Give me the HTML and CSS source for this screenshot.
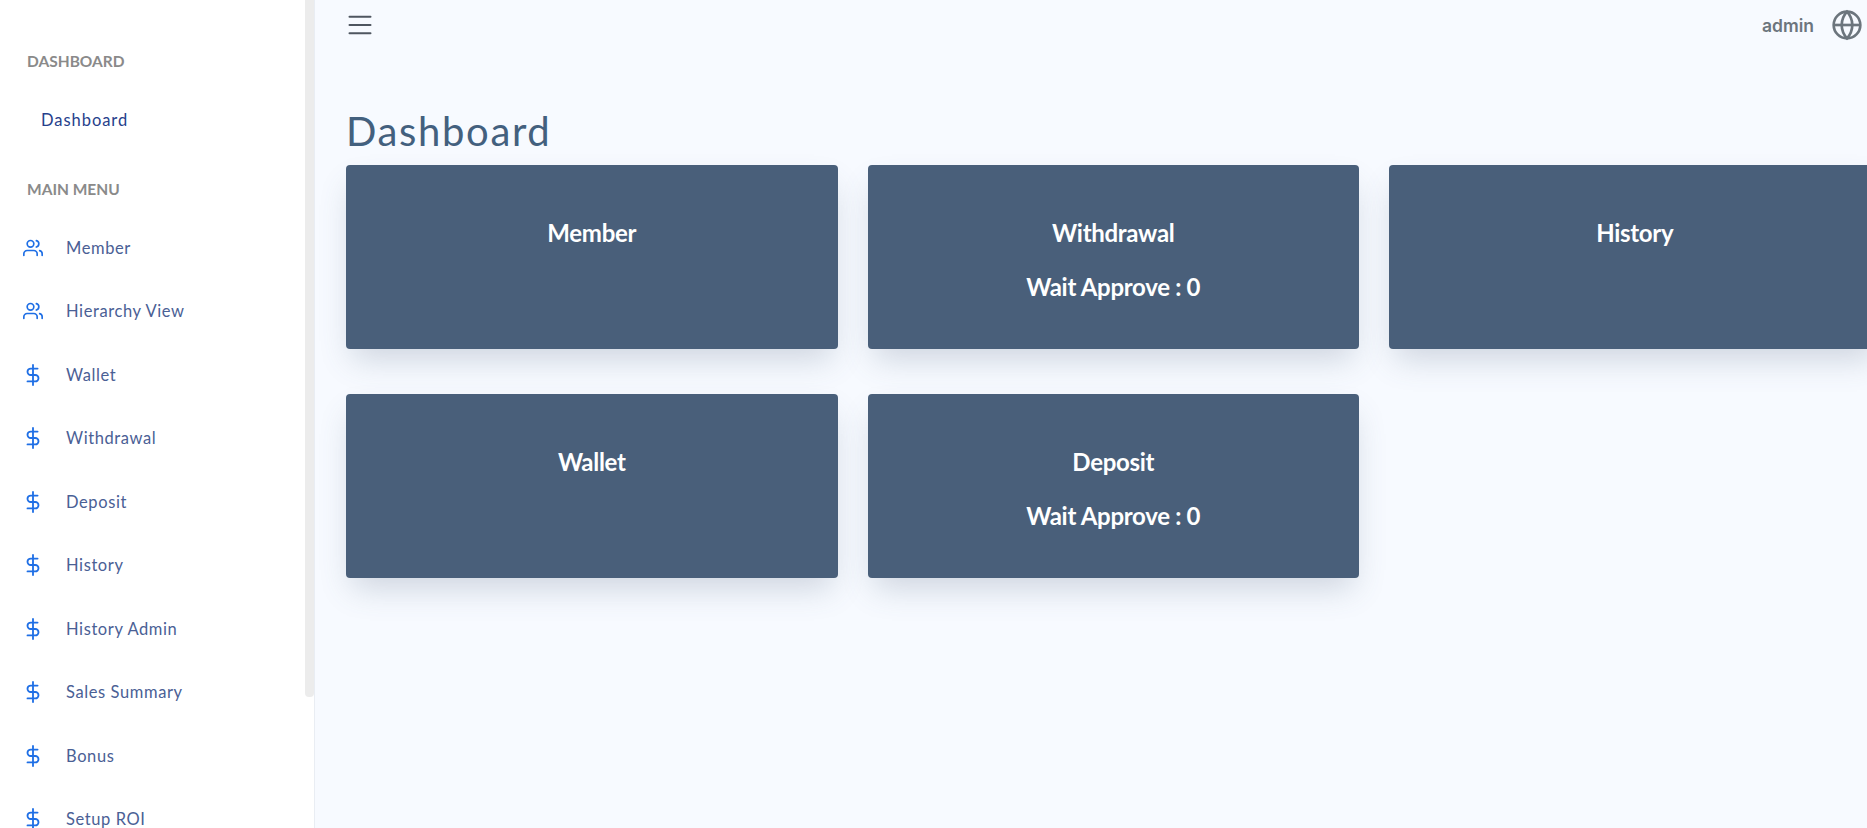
FILE: index.html
```html
<!DOCTYPE html>
<html lang="en">
<head>
    <meta charset="UTF-8">
    <meta name="viewport" content="width=device-width, initial-scale=1.0">
    <title>Dashboard</title>
    <link rel="stylesheet" href="styles.css">
</head>
<body>
    <svg class="icon-defs" width="0" height="0">
        <symbol id="i-users" viewBox="0 0 24 24">
            <path d="M17 21v-2a4 4 0 0 0-4-4H5a4 4 0 0 0-4 4v2"/>
            <circle cx="9" cy="7" r="4"/>
            <path d="M23 21v-2a4 4 0 0 0-3-3.87"/>
            <path d="M16 3.13a4 4 0 0 1 0 7.75"/>
        </symbol>
        <symbol id="i-dollar" viewBox="0 0 24 24">
            <line x1="12" y1="1" x2="12" y2="23"/>
            <path d="M17 5H9.5a3.5 3.5 0 0 0 0 7h5a3.5 3.5 0 0 1 0 7H6"/>
        </symbol>
    </svg>

    <aside class="sidebar">
        <nav class="sidebar-nav">
            <div class="nav-title">DASHBOARD</div>
            <a class="nav-sub">Dashboard</a>
            <div class="nav-title nav-title-main">MAIN MENU</div>
            <a class="nav-item"><svg class="nav-icon nav-icon-users"><use href="#i-users"/></svg>Member</a>
            <a class="nav-item"><svg class="nav-icon nav-icon-users"><use href="#i-users"/></svg>Hierarchy View</a>
            <a class="nav-item"><svg class="nav-icon"><use href="#i-dollar"/></svg>Wallet</a>
            <a class="nav-item"><svg class="nav-icon"><use href="#i-dollar"/></svg>Withdrawal</a>
            <a class="nav-item"><svg class="nav-icon"><use href="#i-dollar"/></svg>Deposit</a>
            <a class="nav-item"><svg class="nav-icon"><use href="#i-dollar"/></svg>History</a>
            <a class="nav-item"><svg class="nav-icon"><use href="#i-dollar"/></svg>History Admin</a>
            <a class="nav-item"><svg class="nav-icon"><use href="#i-dollar"/></svg>Sales Summary</a>
            <a class="nav-item"><svg class="nav-icon"><use href="#i-dollar"/></svg>Bonus</a>
            <a class="nav-item"><svg class="nav-icon"><use href="#i-dollar"/></svg>Setup ROI</a>
        </nav>
        <div class="sidebar-scroll"><div class="sidebar-thumb"></div></div>
    </aside>

    <main class="main">
        <header class="topbar">
            <svg class="menu-icon" viewBox="0 0 24 24">
                <line x1="3" y1="5" x2="21" y2="5"/>
                <line x1="3" y1="12" x2="21" y2="12"/>
                <line x1="3" y1="19" x2="21" y2="19"/>
            </svg>
            <div class="user-box">
                <span class="user-name">admin</span>
                <svg class="globe-icon" viewBox="0 0 24 24">
                    <circle cx="12" cy="12" r="10"/>
                    <line x1="2" y1="12" x2="22" y2="12"/>
                    <path d="M12 2a15.3 15.3 0 0 1 4 10 15.3 15.3 0 0 1-4 10 15.3 15.3 0 0 1-4-10 15.3 15.3 0 0 1 4-10z"/>
                </svg>
            </div>
        </header>
        <h1 class="page-title">Dashboard</h1>
        <div class="card-grid">
            <div class="card"><h4>Member</h4></div>
            <div class="card"><h4>Withdrawal</h4><h4>Wait Approve : 0</h4></div>
            <div class="card"><h4>History</h4></div>
            <div class="card"><h4>Wallet</h4></div>
            <div class="card"><h4>Deposit</h4><h4>Wait Approve : 0</h4></div>
        </div>
    </main>
</body>
</html>
```

FILE: styles.css
```css
* {
    box-sizing: border-box;
}

html, body {
    height: 100%;
}

body {
    margin: 0;
    display: flex;
    overflow: hidden;
    background: #f7faff;
    font-family: "Lato", "Open Sans", sans-serif;
}

.icon-defs {
    position: absolute;
}

.sidebar {
    display: flex;
    flex: 0 0 315px;
    height: 828px;
    overflow: hidden;
    background: #fff;
    border-right: 1px solid #e9edf3;
}

.sidebar-nav {
    flex: 0 0 305px;
    padding-top: 52px;
}

.sidebar-scroll {
    flex: 0 0 9px;
}

.sidebar-thumb {
    height: 697px;
    background: #ececec;
    border-radius: 0 0 4px 4px;
}

.nav-title {
    height: 18px;
    padding-left: 27px;
    font-size: 15.5px;
    line-height: 18px;
    font-weight: 700;
    color: #8a8a8a;
}

.nav-title-main {
    margin-top: 51px;
}

.nav-sub {
    display: block;
    margin-top: 41px;
    height: 18px;
    padding-left: 41px;
    font-size: 16.5px;
    line-height: 18px;
    letter-spacing: 0.95px;
    color: #26408b;
}

.nav-item {
    display: flex;
    align-items: center;
    height: 63.5px;
    padding-left: 22px;
    font-size: 16.5px;
    letter-spacing: 0.6px;
    color: #4a6095;
}

.nav-title-main + .nav-item {
    margin-top: 18px;
}

.nav-icon {
    flex: 0 0 22px;
    width: 22px;
    height: 22px;
    margin-right: 22px;
    fill: none;
    stroke: #1f6fe5;
    stroke-width: 2;
    stroke-linecap: round;
    stroke-linejoin: round;
}

.nav-icon-users {
    flex-basis: 20px;
    width: 20px;
    height: 20px;
    margin: 0 23px 0 1px;
}

.main {
    flex: 1;
    min-width: 0;
    padding-left: 31px;
}

.topbar {
    display: flex;
    justify-content: space-between;
    align-items: center;
    height: 50px;
}

.menu-icon {
    width: 28px;
    height: 28px;
    fill: none;
    stroke: #4f5660;
    stroke-width: 1.7;
    stroke-linecap: round;
}

.user-box {
    display: flex;
    align-items: center;
    gap: 17px;
    padding-right: 4px;
}

.user-name {
    font-family: "Inter", sans-serif;
    font-size: 17.5px;
    font-weight: 600;
    color: #6c757d;
}

.globe-icon {
    width: 32px;
    height: 32px;
    fill: none;
    stroke: #6c757d;
    stroke-width: 2;
}

.page-title {
    margin: 58px 0 0;
    height: 57px;
    font-size: 40px;
    line-height: 47px;
    font-weight: 400;
    letter-spacing: 1.65px;
    color: #43607e;
}

.card-grid {
    display: grid;
    grid-template-columns: repeat(3, 491.5px);
    gap: 45px 30px;
}

.card {
    height: 184px;
    padding-top: 53px;
    text-align: center;
    color: #fff;
    background: #495f7a;
    border-radius: 4px;
    box-shadow: 0 16px 30px -6px rgba(74, 95, 123, 0.24);
}

.card h4 {
    margin: 0 0 24px;
    font-size: 24px;
    line-height: 30px;
    font-weight: 700;
    letter-spacing: -0.3px;
}
```
